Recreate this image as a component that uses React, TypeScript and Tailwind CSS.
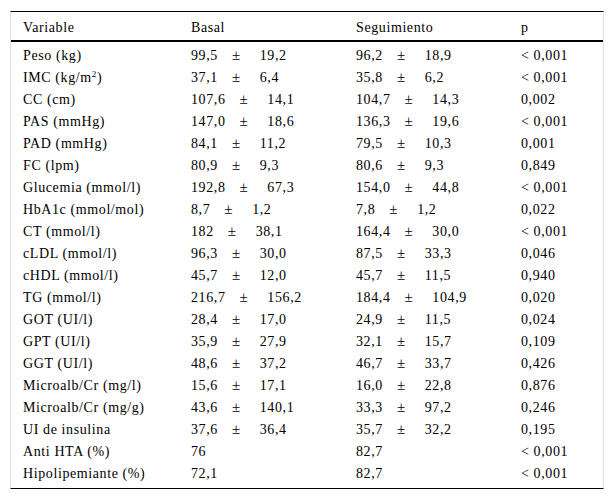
import * as React from "react";

type Row = {
  label: React.ReactNode;
  basal: [string, string?];
  seg: [string, string?];
  p: string;
};

const ROWS: Row[] = [
  { label: "Peso (kg)", basal: ["99,5", "19,2"], seg: ["96,2", "18,9"], p: "< 0,001" },
  {
    label: (
      <>
        IMC (kg/m<sup className="text-[9px]">2</sup>)
      </>
    ),
    basal: ["37,1", "6,4"],
    seg: ["35,8", "6,2"],
    p: "< 0,001",
  },
  { label: "CC (cm)", basal: ["107,6", "14,1"], seg: ["104,7", "14,3"], p: "0,002" },
  { label: "PAS (mmHg)", basal: ["147,0", "18,6"], seg: ["136,3", "19,6"], p: "< 0,001" },
  { label: "PAD (mmHg)", basal: ["84,1", "11,2"], seg: ["79,5", "10,3"], p: "0,001" },
  { label: "FC (lpm)", basal: ["80,9", "9,3"], seg: ["80,6", "9,3"], p: "0,849" },
  { label: "Glucemia (mmol/l)", basal: ["192,8", "67,3"], seg: ["154,0", "44,8"], p: "< 0,001" },
  { label: "HbA1c (mmol/mol)", basal: ["8,7", "1,2"], seg: ["7,8", "1,2"], p: "0,022" },
  { label: "CT (mmol/l)", basal: ["182", "38,1"], seg: ["164,4", "30,0"], p: "< 0,001" },
  { label: "cLDL (mmol/l)", basal: ["96,3", "30,0"], seg: ["87,5", "33,3"], p: "0,046" },
  { label: "cHDL (mmol/l)", basal: ["45,7", "12,0"], seg: ["45,7", "11,5"], p: "0,940" },
  { label: "TG (mmol/l)", basal: ["216,7", "156,2"], seg: ["184,4", "104,9"], p: "0,020" },
  { label: "GOT (UI/l)", basal: ["28,4", "17,0"], seg: ["24,9", "11,5"], p: "0,024" },
  { label: "GPT (UI/l)", basal: ["35,9", "27,9"], seg: ["32,1", "15,7"], p: "0,109" },
  { label: "GGT (UI/l)", basal: ["48,6", "37,2"], seg: ["46,7", "33,7"], p: "0,426" },
  { label: "Microalb/Cr (mg/l)", basal: ["15,6", "17,1"], seg: ["16,0", "22,8"], p: "0,876" },
  { label: "Microalb/Cr (mg/g)", basal: ["43,6", "140,1"], seg: ["33,3", "97,2"], p: "0,246" },
  { label: "UI de insulina", basal: ["37,6", "36,4"], seg: ["35,7", "32,2"], p: "0,195" },
  { label: "Anti HTA (%)", basal: ["76"], seg: ["82,7"], p: "< 0,001" },
  { label: "Hipolipemiante (%)", basal: ["72,1"], seg: ["82,7"], p: "< 0,001" },
];

const GRID = "grid grid-cols-[168px_165px_165px_1fr] pl-[12px]";

function MeanSd({ v }: { v: [string, string?] }) {
  const [mean, sd] = v;
  return (
    <span className="whitespace-nowrap">
      {mean}
      {sd && (
        <>
          <span className="ml-[14px] mr-[19px] text-[15px]">±</span>
          {sd}
        </>
      )}
    </span>
  );
}

export default function App() {
  return (
    <div className="w-[614px] h-[501px] bg-white pt-[11px] pl-[10px]">
      <div
        className="w-[594px] border-t border-b border-t-black border-b-black border-x border-x-[#e2e2e2] text-[14px] tracking-[0.6px] text-black"
        style={{ fontFamily: '"Liberation Serif", "Times New Roman", serif' }}
      >
        {/* header */}
        <div className={`${GRID} h-[30px] pt-[2px] items-center border-b-2 border-black`}>
          <div>Variable</div>
          <div>Basal</div>
          <div>Seguimiento</div>
          <div>p</div>
        </div>

        {/* body */}
        <div className="pt-[2px] pb-[4px]">
          {ROWS.map((r, i) => (
            <div key={i} className={`${GRID} h-[22px] items-center`}>
              <div className="whitespace-nowrap">{r.label}</div>
              <div>
                <MeanSd v={r.basal} />
              </div>
              <div>
                <MeanSd v={r.seg} />
              </div>
              <div>{r.p}</div>
            </div>
          ))}
        </div>
      </div>
    </div>
  );
}
